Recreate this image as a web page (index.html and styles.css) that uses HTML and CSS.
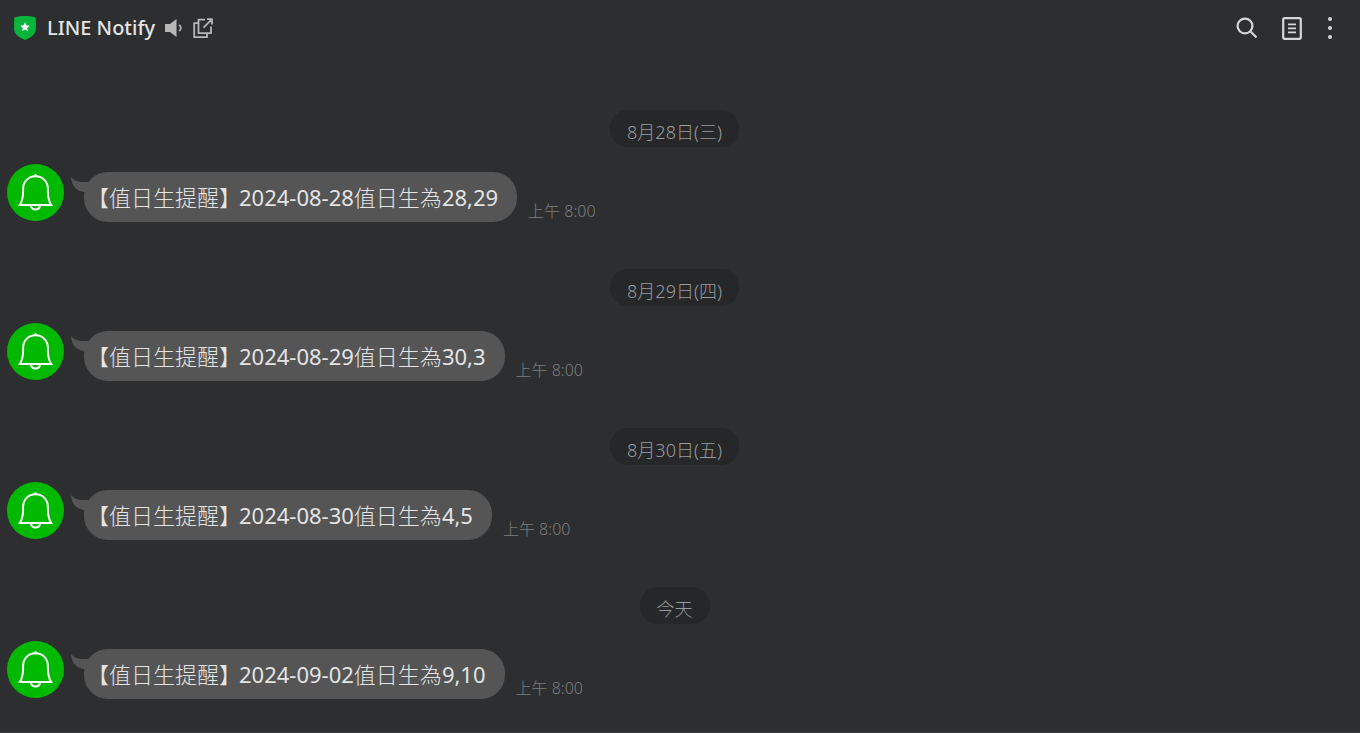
FILE: index.html
```html
<!DOCTYPE html>
<html lang="zh-Hant">
<head>
<meta charset="utf-8">
<meta name="viewport" content="width=device-width, initial-scale=1">
<title>LINE Notify</title>
<link rel="stylesheet" href="styles.css">
</head>
<body>
<svg class="sprite" aria-hidden="true">
  <symbol id="bell" viewBox="0 0 57 57">
    <circle cx="28.5" cy="28.5" r="28.5" fill="#00b900"/>
    <g fill="none" stroke="#fff" stroke-width="2" stroke-linejoin="miter" stroke-linecap="round">
      <path d="M12.800 41c2.600-4 3.300-8 3.300-13.500V25c0-7.500 5.200-12.700 12.400-12.700S40.900 17.500 40.900 25v2.500c0 5.500.7 9.500 3.300 13.500z"/>
      <path d="M24 42c.5 2.300 2.200 3.500 4.500 3.500s4-1.200 4.500-3.500M28.500 12v-1"/>
    </g>
  </symbol>
  <symbol id="tail" viewBox="0 0 26 20">
    <path d="M0 0c3.500 4 8 5.600 17 5l5 3v10l-9-3C5.500 14 .5 9 0 0z" fill="#555"/>
  </symbol>
</svg>
<header class="topbar">
  <svg class="shield" viewBox="0 0 22 24" aria-hidden="true">
    <path d="M11 0c3.500 0 7 .4 10 1.300.5.200.9.600.9 1.200V13c0 5-5 8.500-10.900 11C5.100 21.500.1 18 .1 13V2.500c0-.6.4-1 .9-1.200C4 .4 7.500 0 11 0z" fill="#07b53b"/>
    <path d="M11 6.300l1.400 3 3.200.4-2.400 2.200.7 3.200-2.900-1.600-2.900 1.600.7-3.200-2.400-2.200 3.200-.4z" fill="#fff"/>
  </svg>
  <h1 class="title">LINE Notify</h1>
  <button class="icon-btn sound" type="button" aria-label="Sound">
    <svg width="18" height="18" viewBox="0 0 18 18"><path d="M0 5h5l6.500-5v18L5 13H0z" fill="#b7b7b7"/><path d="M14 6c2.600 1.300 2.600 4.700 0 6" fill="none" stroke="#b7b7b7" stroke-width="1.600"/></svg>
  </button>
  <button class="icon-btn popout" type="button" aria-label="Open in new window">
    <svg width="21" height="21" viewBox="0 0 21 21" fill="none" stroke="#b7b7b7" stroke-width="1.800" stroke-linejoin="round"><path d="M12 1.700H5.500v13.500H18V8.500M5.500 5.200H1.200v14H14v-4M10.500 9.700L19 1.200M14 1.200h5v5.300"/></svg>
  </button>
  <div class="actions">
    <button class="icon-btn" type="button" aria-label="Search">
      <svg width="22" height="22" viewBox="0 0 22 22" fill="none" stroke="#d5d6d6" stroke-width="2.200"><circle cx="9" cy="9" r="7.400"/><path d="M14.300 14.300l6.200 6.200"/></svg>
    </button>
    <button class="icon-btn" type="button" aria-label="Notes">
      <svg width="20" height="23" viewBox="0 0 20 23" fill="none" stroke="#d5d6d6"><rect x="1.200" y="1.200" width="17.600" height="20.600" rx="1.500" stroke-width="2.200"/><path d="M6 7.300h8M6 11.300h8M6 15.300h8" stroke-width="1.700"/></svg>
    </button>
    <button class="icon-btn" type="button" aria-label="More">
      <svg width="8" height="22" viewBox="0 0 8 22" fill="#d5d6d6"><circle cx="4" cy="2" r="2"/><circle cx="4" cy="11" r="2"/><circle cx="4" cy="20" r="2"/></svg>
    </button>
  </div>
</header>
<main class="chat">
  <section class="day">
    <h2 class="date">8月28日(三)</h2>
    <div class="message">
      <svg class="avatar" aria-hidden="true"><use href="#bell"/></svg>
      <div class="bubble"><svg class="tail" aria-hidden="true"><use href="#tail"/></svg><p class="text"><span class="tag">【值日生提醒】</span>2024-08-28<span class="han">值日生為</span>28,29</p></div>
      <time class="time">上午 8:00</time>
    </div>
  </section>
  <section class="day">
    <h2 class="date">8月29日(四)</h2>
    <div class="message">
      <svg class="avatar" aria-hidden="true"><use href="#bell"/></svg>
      <div class="bubble"><svg class="tail" aria-hidden="true"><use href="#tail"/></svg><p class="text"><span class="tag">【值日生提醒】</span>2024-08-29<span class="han">值日生為</span>30,3</p></div>
      <time class="time">上午 8:00</time>
    </div>
  </section>
  <section class="day">
    <h2 class="date">8月30日(五)</h2>
    <div class="message">
      <svg class="avatar" aria-hidden="true"><use href="#bell"/></svg>
      <div class="bubble"><svg class="tail" aria-hidden="true"><use href="#tail"/></svg><p class="text"><span class="tag">【值日生提醒】</span>2024-08-30<span class="han">值日生為</span>4,5</p></div>
      <time class="time">上午 8:00</time>
    </div>
  </section>
  <section class="day">
    <h2 class="date">今天</h2>
    <div class="message">
      <svg class="avatar" aria-hidden="true"><use href="#bell"/></svg>
      <div class="bubble"><svg class="tail" aria-hidden="true"><use href="#tail"/></svg><p class="text"><span class="tag">【值日生提醒】</span>2024-09-02<span class="han">值日生為</span>9,10</p></div>
      <time class="time">上午 8:00</time>
    </div>
  </section>
</main>
</body>
</html>
```
FILE: styles.css
```css
* { box-sizing: border-box; }
body {
  margin: 0;
  background: #2d2e30;
  color: #e4e4e4;
  font-family: "Noto Sans", "Noto Sans CJK TC", sans-serif;
}
h1, h2, p { margin: 0; font-weight: 400; }
.sprite { position: absolute; width: 0; height: 0; }
.topbar {
  display: flex;
  align-items: center;
  height: 56px;
  padding: 0 26px 0 14px;
}
.shield { width: 22px; height: 24px; }
.title {
  margin-left: 11px;
  font-size: 20px;
  line-height: 28px;
  font-weight: 500;
}
.icon-btn {
  display: flex;
  padding: 0;
  border: 0;
  background: none;
  cursor: pointer;
}
.sound { margin-left: 10px; }
.popout { margin-left: 10px; }
.actions {
  display: flex;
  align-items: center;
  gap: 24px;
  margin-left: auto;
}
.chat {
  padding: 54px 18px 0 7px;
  border-bottom: 1px solid #3b3c3d;
}
.day { margin-bottom: 46px; }
.day:last-child { margin-bottom: 0; padding-bottom: 32px; }
.date {
  width: fit-content;
  margin: 0 auto 17px;
  padding: 10px 17px 3px;
  border-radius: 18px;
  background: #262729;
  color: #999a9c;
  font-size: 18px;
  line-height: 24px;
  font-weight: 300;
}
.message { display: flex; align-items: flex-start; }
.avatar { flex: none; width: 57px; height: 57px; }
.bubble {
  position: relative;
  margin: 8px 11px 0 20px;
  padding: 10px 19px 10px 14px;
  border-radius: 24px;
  background: #555;
}
.tail {
  position: absolute;
  top: 5px;
  left: -13px;
  width: 26px;
  height: 20px;
}
.text {
  font-size: 22px;
  line-height: 30px;
}
.tag, .han { font-weight: 300; }
.tag {
  margin-right: 9px;
  font-feature-settings: "halt";
}
.time {
  margin-top: 35px;
  color: #7c7d7f;
  font-size: 16px;
  line-height: 24px;
  font-weight: 300;
}
```
